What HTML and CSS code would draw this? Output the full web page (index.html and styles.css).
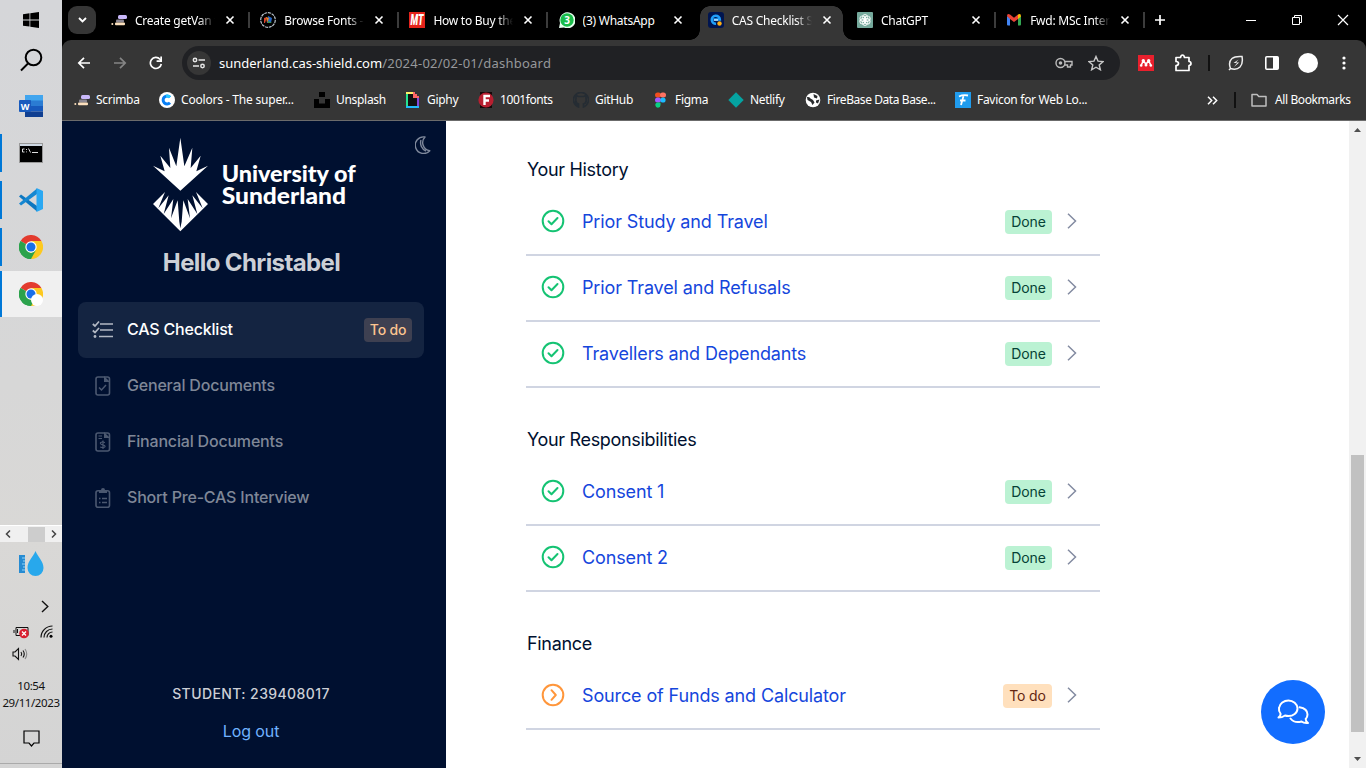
FILE: index.html
```html
<!DOCTYPE html>
<html lang="en">
<head>
<meta charset="utf-8">
<title>CAS Checklist</title>
<link rel="stylesheet" href="styles.css">
</head>
<body>
<svg class="defs" width="0" height="0" aria-hidden="true">
  <symbol id="x" viewBox="0 0 10 10"><path d="M1.5 1.5l7 7m0-7l-7 7" fill="none" stroke="#fff" stroke-width="1.6"/></symbol>
  <symbol id="scrimba" viewBox="0 0 16 16"><rect x="7" y="3" width="9" height="4" rx="1.5" fill="#c9b8fa"/><rect x="5" y="7.5" width="8" height="3" rx="1" fill="#8b8792"/><rect x="4" y="10.500" width="10" height="2.700" rx="1" fill="#fce0bd"/><circle cx="1.300" cy="12" r="1" fill="#fce0bd"/></symbol>
  <symbol id="chrome" viewBox="0 0 24 24"><path d="M12 12L1.600 6A12 12 0 0 1 22.400 6z" fill="#e33b2e"/><path d="M12 12L22.400 6A12 12 0 0 1 12 24z" fill="#fdc91f"/><path d="M12 12V24A12 12 0 0 1 1.600 6z" fill="#2ba24c"/><path d="M12 6H22.400L17 15z" fill="#fdc91f"/><path d="M17.200 15L12 24L8 14z" fill="#fdc91f"/><path d="M1.600 6L6.800 15L12 18L17 15L12 24A12 12 0 0 1 1.600 6" fill="#2ba24c"/><circle cx="12" cy="12" r="5.700" fill="#fff"/><circle cx="12" cy="12" r="4.500" fill="#1a6fe8"/></symbol>
  <symbol id="check" viewBox="0 0 24 24"><g fill="none" stroke="#15c373" stroke-width="2"><circle cx="12" cy="12" r="10.300"/><path d="M7.500 12.200l3 3 6-6.200" stroke-linecap="round" stroke-linejoin="round"/></g></symbol>
  <symbol id="next" viewBox="0 0 10 16"><path d="M1 .8l7.500 7.200L1 15.200" fill="none" stroke="#838ba1" stroke-width="1.500"/></symbol>
</svg>
<div class="screen">
  <aside class="taskbar">
    <div class="task start"><svg width="16" height="16" viewBox="0 0 16 16"><path d="M0 2.200l6.500-.9v6.200H0zM7.300 1.200L16 0v7.500H7.300zM0 8.400h6.500v6.200L0 13.700zM7.300 8.400H16V16l-8.700-1.200z"/></svg></div>
    <div class="task search"><svg width="24" height="24" viewBox="0 0 24 24"><g fill="none" stroke="#000" stroke-width="2"><circle cx="14.500" cy="9.500" r="7.800"/><path d="M9 15.500L2 22.500"/></g></svg></div>
    <div class="task"><svg width="24" height="22" viewBox="0 0 24 22"><path d="M6 0h18v6H6z" fill="#41a5ee"/><path d="M6 5.500h18V11H6z" fill="#2b7cd3"/><path d="M6 11h18v5.500H6z" fill="#185abd"/><path d="M6 16.500h18V22H6z" fill="#103f91"/><rect y="5" width="12" height="12" rx="1" fill="#185abd"/><text x="6" y="14.500" text-anchor="middle" class="word-letter">W</text></svg></div>
    <div class="task open"><svg width="24" height="20" viewBox="0 0 24 20"><rect x=".5" y=".5" width="23" height="19" fill="#000" stroke="#999"/><path d="M1 1h22v2H1z" fill="#cfd9e4"/><path d="M5.500 6H3.500v3h2M7.500 6v1m0 1.500v.8M9.500 5.500l2 4M13 9.500h6" stroke="#ddd" fill="none"/></svg></div>
    <div class="task open"><svg width="24" height="24" viewBox="0 0 24 24"><path d="M0 8.500L2 6.500 18 18v5.500z" fill="#0d77c0"/><path d="M0 15.500L2 17.500 18 6V.5z" fill="#1587d1"/><path d="M17.500 0L24 3v18l-6.500 3z" fill="#2aa8f2"/></svg></div>
    <div class="task open"><svg width="24" height="24"><use href="#chrome"/></svg></div>
    <div class="task open current"><svg width="24" height="24"><use href="#chrome"/><circle cx="18" cy="18" r="6" fill="#fff"/></svg></div>
    <div class="task-gap"></div>
    <div class="hscroll"><svg width="6" height="8" viewBox="0 0 6 8"><path d="M5 .5L1.500 4 5 7.500" fill="none" stroke="#444" stroke-width="1.500"/></svg><i></i><svg width="6" height="8" viewBox="0 0 6 8"><path d="M1 .5L4.500 4 1 7.500" fill="none" stroke="#444" stroke-width="1.500"/></svg></div>
    <div class="weather"><svg width="26" height="25" viewBox="0 0 26 25"><path d="M1 4h6v18H1z" fill="#268bd2"/><path d="M4 7h3M5 10h2M4 13h3M5 16h2M4 19h3" stroke="#8fd4fa"/><path d="M17.500 0C20 6 25.500 10 25.500 17a8 8 0 0 1-16 0C9.500 10 15 6 17.500 0z" fill="#28a8ec"/></svg></div>
    <div class="expand"><svg width="8" height="13" viewBox="0 0 8 13"><path d="M1 1l5.800 5.500L1 12" fill="none" stroke="#111" stroke-width="1.400"/></svg></div>
    <div class="tray">
      <svg width="16" height="14" viewBox="0 0 16 14"><path d="M3 2.500h12v8H3zM1 5v3" fill="none" stroke="#111"/><path d="M4.500 4v4" stroke="#111"/><circle cx="11" cy="8.500" r="4.800" fill="#d91f30"/><path d="M9 6.500l4 4m0-4l-4 4" stroke="#fff" stroke-width="1.300"/></svg>
      <svg width="13" height="13" viewBox="0 0 13 13"><g fill="none" stroke="#111" stroke-width="1.200"><path d="M1 12.500A11.500 11.500 0 0 1 12.500 1M4 12.500A8.500 8.500 0 0 1 12.500 4M7 12.500A5.500 5.500 0 0 1 12.500 7"/></g><circle cx="11" cy="11.300" r="1.500"/></svg>
    </div>
    <div class="volume"><svg width="16" height="14" viewBox="0 0 16 14"><g fill="none" stroke="#111" stroke-width="1.100"><path d="M1 5h2l3.500-3.500v11L3 9H1zM9 5q1.500 2 0 4M11 3.500q2.500 3.500 0 7"/><path d="M13 2q3.500 5 0 10" stroke="#888"/></g></svg></div>
    <div class="clock"><span>10:54</span><span>29/11/2023</span></div>
    <div class="notice"><svg width="17" height="17" viewBox="0 0 17 17"><path d="M1 1h15v12h-5L8.500 16 6 13H1z" fill="none" stroke="#000" stroke-width="1.200"/></svg></div>
  </aside>

  <div class="browser">
    <header class="tabstrip">
      <div class="tab-menu"><svg width="9" height="6" viewBox="0 0 9 6"><path d="M1 1l3.500 3.500L8 1" fill="none" stroke="#fff" stroke-width="1.800"/></svg></div>
      <div class="tabs">
        <div class="tab"><svg width="16" height="16"><use href="#scrimba"/></svg><span class="fade">Create getVan t</span><svg class="close"><use href="#x"/></svg></div>
        <div class="tab"><svg width="16" height="16" viewBox="0 0 16 16"><circle cx="8" cy="8" r="7.300" fill="#000" stroke="#b7c2cb" stroke-width="1.200" stroke-dasharray="3 .8"/><path d="M4 6l3-1-2 6H4z" fill="#d8432c"/><path d="M8 4l4 2-1 5H7z" fill="#2768c8"/><path d="M8 9l4 2H8z" fill="#3d9c39"/><path d="M6 5l3 1-2 5z" fill="#e58424"/></svg><span class="fade">Browse Fonts - G</span><svg class="close"><use href="#x"/></svg></div>
        <div class="tab"><svg width="16" height="16" viewBox="0 0 16 16"><path d="M0 0h16v16H0z" fill="#e3231b"/><text x="8" y="13" text-anchor="middle" textLength="13" lengthAdjust="spacingAndGlyphs" class="mt-mark">MT</text></svg><span class="fade">How to Buy the M</span><svg class="close"><use href="#x"/></svg></div>
        <div class="tab"><svg width="16" height="16" viewBox="0 0 16 16"><path d="M0 16l1-5A8 8 0 1 1 5 15.500z" fill="#e8fff0"/><circle cx="8" cy="8" r="6.700" fill="#19bd4b"/><text x="8" y="11.800" text-anchor="middle" class="wa-count">3</text></svg><span class="fade whole">(3) WhatsApp</span><svg class="close"><use href="#x"/></svg></div>
        <div class="tab active"><svg width="16" height="16" viewBox="0 0 16 16"><rect width="16" height="16" rx="3" fill="#001550"/><path d="M8 11.800A4 4 0 1 1 11.800 7.500H5.500" fill="none" stroke="#20a0fa" stroke-width="2.600"/><path d="M6 8h4" stroke="#d7f1ff" stroke-width="1.300"/><circle cx="11.500" cy="11.500" r="2.200" fill="#ffae13"/></svg><span class="fade">CAS Checklist S</span><svg class="close"><use href="#x"/></svg></div>
        <div class="tab"><svg width="16" height="16" viewBox="0 0 16 16"><rect width="16" height="16" rx="1" fill="#75a99c"/><g fill="none" stroke="#fff" stroke-width=".9"><ellipse cx="8" cy="5.500" rx="2.600" ry="3"/><ellipse cx="8" cy="5.500" rx="2.600" ry="3" transform="rotate(60 8 8)"/><ellipse cx="8" cy="5.500" rx="2.600" ry="3" transform="rotate(120 8 8)"/><ellipse cx="8" cy="5.500" rx="2.600" ry="3" transform="rotate(180 8 8)"/><ellipse cx="8" cy="5.500" rx="2.600" ry="3" transform="rotate(240 8 8)"/><ellipse cx="8" cy="5.500" rx="2.600" ry="3" transform="rotate(300 8 8)"/></g></svg><span class="fade">ChatGPT</span><svg class="close"><use href="#x"/></svg></div>
        <div class="tab"><svg width="16" height="16" viewBox="0 0 16 16"><path d="M1 4l3 2v7.500H2q-1 0-1-1z" fill="#4285f4"/><path d="M12 6l3-2v8.500q0 1-1 1h-2z" fill="#34a853"/><path d="M1 4q0-3 3-1.500l4 3.200 4-3.200V7L8 10 4 7z" fill="#ea4335"/><path d="M12 2.500Q15 1 15 4.500L12 7z" fill="#fbbc04"/></svg><span class="fade">Fwd: MSc Intern</span><svg class="close"><use href="#x"/></svg></div>
      </div>
      <svg class="plus" width="12" height="12" viewBox="0 0 12 12"><path d="M6 1v10M1 6h10" stroke="#fff" stroke-width="1.700"/></svg>
      <div class="window-controls">
        <svg width="12" height="12" viewBox="0 0 12 12"><path d="M1 6.500h10" stroke="#fff"/></svg>
        <svg width="12" height="12" viewBox="0 0 12 12"><path d="M1.500 3.500h7v7h-7zM3.500 3V1.500h7v7H9" fill="none" stroke="#fff"/></svg>
        <svg width="12" height="12" viewBox="0 0 12 12"><path d="M1 1l10 10M11 1L1 11" stroke="#fff" stroke-width="1.200"/></svg>
      </div>
    </header>
    <div class="chrome-bars">
    <div class="toolbar">
      <div class="navs">
        <svg width="14" height="14" viewBox="0 0 14 14"><path d="M13 7H2M7 1.800L1.800 7 7 12.200" fill="none" stroke="#fff" stroke-width="1.700"/></svg>
        <svg width="14" height="14" viewBox="0 0 14 14"><path d="M1 7h11M7 1.800L12.200 7 7 12.200" fill="none" stroke="#858585" stroke-width="1.700"/></svg>
        <svg width="14" height="14" viewBox="0 0 14 14"><path d="M12.300 8A5.500 5.500 0 1 1 11 3.300L12.500 5" fill="none" stroke="#fff" stroke-width="1.700"/><path d="M13 .5v5.500H7.600V4.300h3.700V.5z" fill="#fff"/></svg>
      </div>
      <div class="omnibox">
        <div class="site"><svg width="14" height="12" viewBox="0 0 14 12"><g fill="none" stroke="#e6e6e6" stroke-width="1.500"><circle cx="3" cy="3" r="1.700"/><path d="M6.500 3H13M1 9h6"/><circle cx="10.500" cy="9" r="1.700"/></g></svg></div>
        <div class="url">sunderland.cas-shield.com<span>/2024-02/02-01/dashboard</span></div>
        <svg width="18" height="12" viewBox="0 0 18 12"><circle cx="5.500" cy="6" r="4.500" fill="none" stroke="#bcbcbc" stroke-width="1.400"/><circle cx="5.500" cy="6" r="1.800" fill="#bcbcbc"/><path d="M9.500 4.500H17V8h-1.500v2h-3V8h-3" fill="none" stroke="#bcbcbc" stroke-width="1.400"/></svg>
        <svg class="star" width="16" height="16" viewBox="0 0 16 16"><path d="M8 1.500l2 4.600 5 .5-3.800 3.300 1.200 4.900L8 12.200l-4.400 2.600 1.200-4.900L1 6.600l5-.5z" fill="none" stroke="#c7c7c7" stroke-width="1.400"/></svg>
      </div>
      <div class="extensions">
        <svg width="16" height="16" viewBox="0 0 16 16"><path d="M0 0h16v16H0z" fill="#e9202d"/><g fill="#fff"><circle cx="5.300" cy="5.800" r="1.700"/><circle cx="10.700" cy="5.800" r="1.700"/><circle cx="3.200" cy="10.500" r="1.300"/><circle cx="8" cy="10" r="1.500"/><circle cx="12.800" cy="10.500" r="1.300"/></g><path d="M3 10.500L5.300 6 8 9l2.700-3L13 10.500" stroke="#fff" stroke-width="1.600" fill="none"/></svg>
        <svg width="18" height="18" viewBox="0 0 18 18"><path d="M2 3.500h4.500Q7 1 8.500 1T10.500 3.500H15v4q2 .2 2 2t-2 2v5H2v-5q2.500 0 2.500-2T2 7.500z" fill="none" stroke="#fff" stroke-width="1.700" stroke-linejoin="round"/></svg>
        <i></i>
        <svg width="16" height="16" viewBox="0 0 16 16"><path d="M2.500 13.500Q0 7 4 3.500 7 1 14 1.500q1.300 7-2 10.500-3.500 3.500-9.500 1.500zM1 15l2-2" fill="none" stroke="#eee" stroke-width="1.500"/><path d="M10.500 4.500L5.500 8H9l-3 4 5.200-4.600H8z" fill="#eee"/></svg>
        <svg width="16" height="16" viewBox="0 0 16 16"><rect x="1.800" y="1.800" width="12.400" height="12.400" rx="1" fill="none" stroke="#fff" stroke-width="1.600"/><path d="M9 2h5v12H9z" fill="#fff"/></svg>
        <b></b>
        <svg width="4" height="16" viewBox="0 0 4 16"><g fill="#fff"><circle cx="2" cy="3" r="1.600"/><circle cx="2" cy="8" r="1.600"/><circle cx="2" cy="13" r="1.600"/></g></svg>
      </div>
    </div>
    <div class="bookmarks">
      <div class="bm"><svg width="16" height="16"><use href="#scrimba"/></svg><span>Scrimba</span></div>
      <div class="bm coolors"><svg width="16" height="16" viewBox="0 0 16 16"><circle cx="8" cy="8" r="8" fill="#fff"/><path d="M11 5.200A4 4 0 1 0 11 10.800" fill="none" stroke="#087ff5" stroke-width="3"/><path d="M7 4.100A4 4 0 0 1 11 5.200" fill="none" stroke="#27c7ff" stroke-width="3"/></svg><span>Coolors - The super...</span></div>
      <div class="bm"><svg width="16" height="16" viewBox="0 0 16 16"><path d="M5 0h6v5H5zM0 7h5v4.500h6V7h5v9H0z"/></svg><span>Unsplash</span></div>
      <div class="bm giphy"><svg width="13" height="16" viewBox="0 0 13 16"><path d="M0 1h2v14H0z" fill="#27e391"/><path d="M0 14h13v2H0z" fill="#20bcff"/><path d="M11 6h2v8h-2z" fill="#8347db"/><path d="M0 0h7v2H0z" fill="#fff06a"/><path d="M7 0h2v2h2v2h2v2H7z" fill="#ff6565"/><path d="M2 2h5v4h4v8H2z" fill="#121212"/></svg><span>Giphy</span></div>
      <div class="bm fonts"><svg width="16" height="16" viewBox="0 0 16 16"><path d="M2 0h12v16H2z" fill="#150709"/><circle cx="8" cy="8" r="7.600" fill="#b71f30"/><path d="M6.500 13V4H12M6.500 8.500H11" stroke="#fff" stroke-width="2.400" fill="none"/></svg><span>1001fonts</span></div>
      <div class="bm"><svg width="16" height="16" viewBox="0 0 16 16"><path d="M5.500 15v-3Q2 11 3 6.500L3 3.500l2.500 1h5l2.500-1v3Q14 11 10.500 12v3A7.500 7.500 0 1 0 5.500 15zM1 10q2 0 2.500 2.500L5.500 13" fill="none" stroke="#252c33" stroke-width="1.700"/></svg><span>GitHub</span></div>
      <div class="bm figma"><svg width="11" height="16" viewBox="0 0 11 16"><rect x="0" y=".5" width="6" height="5" rx="2.500" fill="#f24e1e"/><rect x="5" y=".5" width="6" height="5" rx="2.500" fill="#ff7262"/><rect y="5.500" width="6" height="5" rx="2.500" fill="#a259ff"/><circle cx="8" cy="8" r="2.600" fill="#1abcfe"/><path d="M2.500 10.500h3V13a2.600 2.600 0 1 1-3-2.500z" fill="#0acf83"/></svg><span>Figma</span></div>
      <div class="bm"><svg width="16" height="16" viewBox="0 0 16 16"><path d="M8 .3L15.700 8 8 15.700.3 8z" fill="#05a3a1"/></svg><span>Netlify</span></div>
      <div class="bm firebase"><svg width="16" height="16" viewBox="0 0 16 16"><circle cx="8" cy="8" r="7.300" fill="#fff"/><path d="M2 5q3-.5 3.500 1.500L8 8l1.500 2.500L7.500 13 6 10 2.500 8zM8.500 2l4 2-.5 2.500-3-1zM11 8.500l3.500-1L13 11.500l-2-1z" fill="#292b2d"/></svg><span>FireBase Data Base...</span></div>
      <div class="bm"><svg width="16" height="16" viewBox="0 0 16 16"><path d="M0 0h16v16H0z" fill="#209cee"/><path d="M4 4.500q4-2 9-1M8.500 4L6 13M5 8.500h5.500" fill="none" stroke="#fff" stroke-width="1.800"/></svg><span>Favicon for Web Lo...</span></div>
      <div class="more"><svg width="11" height="9" viewBox="0 0 11 9"><path d="M1 .8l3.700 3.700L1 8.200M6 .8l3.700 3.700L6 8.200" fill="none" stroke="#fff" stroke-width="1.500"/></svg></div>
      <div class="bm-sep"></div>
      <div class="bm all"><svg width="16" height="14" viewBox="0 0 16 14"><path d="M1 1.500h5l1.800 2H15V13H1z" fill="none" stroke="#bebebe" stroke-width="1.500" stroke-linejoin="round"/></svg><span>All Bookmarks</span></div>
    </div>
    </div>

    <div class="page">
      <nav class="sidebar">
        <div class="brand">
          <svg class="logo" width="205" height="97" viewBox="270 43 615 291"><g fill="#fff"><path d="M355 207L273 132 308 149 295 102 325 139 321 78 343 134 355 48 367 134 391 78 386 139 416 102 403 149 438 132z"/><path d="M273 247L309 211 289 260 320 221 305 277 334 232 327 290 347 236 352 300 355 320 359 300 364 236 384 290 377 232 406 277 391 221 422 260 402 211 438 247 355 329z"/></g><g class="logo-text"><text x="479" y="180" textLength="402" lengthAdjust="spacingAndGlyphs">University of</text><text x="479" y="247" textLength="373" lengthAdjust="spacingAndGlyphs">Sunderland</text></g></svg>
          <svg class="moon" width="16" height="18" viewBox="0 0 16 18"><path d="M10 1A8.300 8.300 0 1 0 14.800 14.700 8.100 8.100 0 0 1 10 1zM6 4a9 9 0 0 0 5 11" fill="none" stroke="#7f899c" stroke-width="1.400" stroke-linejoin="round"/></svg>
        </div>
        <h1>Hello Christabel</h1>
        <div class="menu">
          <div class="item selected"><svg width="22" height="20" viewBox="0 0 22 20"><g fill="none" stroke="#b2b8c3" stroke-width="1.700"><path d="M8 4h13M8 10h13M7 16.500h14M.8 4L3 6l4-4.500M.8 10.500l2.200 2L7 8"/></g><circle cx="3" cy="16.500" r="1.400" fill="#b2b8c3"/></svg><span>CAS Checklist</span><em>To do</em></div>
          <div class="item"><svg width="22" height="20" viewBox="0 0 22 20"><rect x="4" y="1" width="13.500" height="18" rx="2" fill="none" stroke="#4b5870" stroke-width="1.600"/><path d="M12 0l6 6h-6z" fill="#4b5870"/><path d="M7 11.500l2.500 2.500L14 9" fill="none" stroke="#4b5870" stroke-width="1.500"/></svg><span>General Documents</span></div>
          <div class="item"><svg width="22" height="20" viewBox="0 0 22 20"><rect x="4" y="1" width="13.500" height="18" rx="2" fill="none" stroke="#4b5870" stroke-width="1.600"/><path d="M12 0l6 6h-6z" fill="#4b5870"/><path d="M6.500 4H10M6.500 6.500H10M13 10.500q-5-1-4.500 1 .2 1 2.500 1.500 2.300.5 2 1.700-.8 1.500-4.800.3M11 8.500v8.500" fill="none" stroke="#4b5870" stroke-width="1.200"/></svg><span>Financial Documents</span></div>
          <div class="item"><svg width="22" height="20" viewBox="0 0 22 20"><rect x="4" y="2.800" width="13.500" height="16.400" rx="2" fill="none" stroke="#4b5870" stroke-width="1.600"/><path d="M7 5V2h2a2 2 0 0 1 4 0h2v3z" fill="#4b5870"/><path d="M7 10.500h1.500M10 10.500h5M7 14.500h1.500M10 14.500h5" stroke="#4b5870" stroke-width="1.300"/></svg><span>Short Pre-CAS Interview</span></div>
        </div>
        <div class="account"><p>STUDENT: 239408017</p><a>Log out</a></div>
      </nav>
      <main class="content">
        <section><h2>Your History</h2>
          <div class="row"><svg class="state"><use href="#check"/></svg><a>Prior Study and Travel</a><em>Done</em><svg class="next"><use href="#next"/></svg></div>
          <div class="row"><svg class="state"><use href="#check"/></svg><a>Prior Travel and Refusals</a><em>Done</em><svg class="next"><use href="#next"/></svg></div>
          <div class="row"><svg class="state"><use href="#check"/></svg><a>Travellers and Dependants</a><em>Done</em><svg class="next"><use href="#next"/></svg></div>
        </section>
        <section><h2>Your Responsibilities</h2>
          <div class="row"><svg class="state"><use href="#check"/></svg><a>Consent 1</a><em>Done</em><svg class="next"><use href="#next"/></svg></div>
          <div class="row"><svg class="state"><use href="#check"/></svg><a>Consent 2</a><em>Done</em><svg class="next"><use href="#next"/></svg></div>
        </section>
        <section><h2>Finance</h2>
          <div class="row"><svg class="state" viewBox="0 0 24 24"><g fill="none" stroke="#ff963b" stroke-width="2"><circle cx="12" cy="12" r="10.300"/><path d="M10.500 7.200l4.300 4.800-4.300 4.800" stroke-linecap="round" stroke-linejoin="round"/></g></svg><a>Source of Funds and Calculator</a><em class="todo">To do</em><svg class="next"><use href="#next"/></svg></div>
        </section>
        <button class="chat" aria-label="Chat"><svg width="32" height="26" viewBox="0 0 32 26"><g fill="none" stroke="#fff" stroke-width="2" stroke-linejoin="round" stroke-linecap="round"><path d="M1.500 18.500Q4 16.500 3.500 14.500 1.500 12 2 9C2.500 4.500 7 1.500 11.500 1.500S20.500 5 20.500 9.500 16 17 11.500 17q-2 0-3.500-.5-3 2-6.500 2z"/><path d="M22.500 8.200Q30.500 9.500 30.500 15.500q0 2.500-1.800 4.500 0 2.500 2.300 4-4 .5-6.500-1.500-7 2-11-3"/></g></svg></button>
      </main>
      <div class="vscroll"><svg width="7" height="4" viewBox="0 0 7 4"><path d="M0 4l3.500-4L7 4z" fill="#505050"/></svg><i></i><svg width="7" height="4" viewBox="0 0 7 4"><path d="M0 0h7L3.500 4z" fill="#505050"/></svg></div>
    </div>
  </div>
</div>
</body>
</html>
```
FILE: styles.css
```css
* { box-sizing: border-box; }
body { margin: 0; font-family: Inter, sans-serif; overflow: hidden; }
svg { display: block; flex: none; }
.defs { position: absolute; }
em { font-style: normal; }
.screen { display: grid; grid-template-columns: 62px 1304px; width: 1366px; height: 768px; }

.taskbar { display: flex; flex-direction: column; height: 768px; background: linear-gradient(#d5d6d9, #d7d7d7 50%, #d9d8d6 70%, #d4d4d4); font-family: "Noto Sans", sans-serif; }
.task { display: flex; align-items: center; justify-content: center; height: 47px; flex: none; position: relative; }
.task.start { height: 40px; }
.task.search { height: 42px; padding-bottom: 2px; }
.task.open::before { content: ""; position: absolute; left: 0; top: 5px; width: 2px; height: 38px; background: #0078d7; }
.task.current { background: #f0f0f0; margin-top: 1px; height: 46px; }
.task.current::before { top: 0; height: 46px; }
.word-letter { font: 700 9px "Open Sans", sans-serif; fill: #fff; }
.wa-count { font: 700 10px "Open Sans", sans-serif; fill: #fff; }
.mt-mark { font: italic 900 14px Roboto, sans-serif; fill: #fff; }
.task-gap { flex: 1; }
.hscroll { height: 17px; background: #f0f0f0; display: flex; align-items: center; padding: 0 5px; gap: 17px; border-top: 1px solid #fff; }
.hscroll i { width: 17px; height: 15px; background: #cdcdcd; }
.hscroll svg:last-child { margin-left: -11px; }
.weather { height: 44px; display: flex; align-items: center; justify-content: center; padding-bottom: 1px; }
.expand { height: 37px; display: flex; align-items: center; padding: 3px 0 0 41px; }
.tray { height: 17px; display: flex; align-items: center; gap: 11px; padding-left: 13px; }
.volume { height: 27px; display: flex; align-items: center; padding-left: 12px; }
.clock { height: 44px; padding-top: 10px; display: flex; flex-direction: column; align-items: center; font-size: 11.500px; line-height: 17px; color: #111; letter-spacing: -.4px; white-space: nowrap; }
.notice { height: 57px; padding: 19px 0 0 23px; }
.notice::after { content: ""; display: block; height: 1px; margin: 16px 0 0 -23px; background: #aaa; }

.browser { display: flex; flex-direction: column; height: 768px; background: #000; font-family: "Noto Sans", sans-serif; }
.tabstrip { height: 40px; display: flex; align-items: center; color: #fff; }
.tab-menu { width: 28px; height: 28px; margin: 0 7px 0 6px; border-radius: 9px; background: #363636; display: flex; align-items: center; justify-content: center; }
.tabs { display: grid; grid-template-columns: repeat(7, 149.200px); height: 40px; }
.tab { position: relative; display: flex; align-items: center; padding-left: 8px; gap: 8px; }
.tab::after { content: ""; position: absolute; left: 145px; top: 12px; width: 2px; height: 16px; background: #3c3c3c; }
.tab.active::after, .tab:nth-child(4)::after { display: none; }
.tab > svg, .tab > span { position: relative; }
.fade { width: 80px; overflow: hidden; white-space: nowrap; font-size: 12px; letter-spacing: -.25px; line-height: 18px; padding-top: 1px; mask-image: linear-gradient(90deg, #000 64px, transparent 80px); }
.whole { mask-image: none; }
.close { width: 10px; height: 10px; margin-left: 2px; }
.tab.active::before { content: ""; position: absolute; left: -10px; top: 6px; width: 163px; height: 34px;
  background:
    radial-gradient(circle at 0 0, transparent 9.500px, #363636 10px) 0 24px / 10px 10px no-repeat,
    radial-gradient(circle at 10px 0, transparent 9.500px, #363636 10px) 153px 24px / 10px 10px no-repeat,
    radial-gradient(circle at 10px 10px, #363636 9.500px, transparent 10px) 10px 0 / 10px 10px no-repeat,
    radial-gradient(circle at 0 10px, #363636 9.500px, transparent 10px) 143px 0 / 10px 10px no-repeat,
    linear-gradient(#363636, #363636) 20px 0 / 123px 10px no-repeat,
    linear-gradient(#363636, #363636) 10px 10px / 143px 24px no-repeat; }
.plus { margin-left: 7px; }
.window-controls { display: flex; gap: 34px; margin-left: auto; padding-right: 17px; }

.chrome-bars { background: #363636; border-radius: 9px 9px 0 0; height: 81px; border-bottom: 1px solid #6b6b6b; flex: none; }
.toolbar { height: 46px; display: flex; align-items: center; padding-left: 15px; }
.navs { display: flex; gap: 22px; width: 105px; }
.omnibox { width: 938px; height: 34px; border-radius: 17px; background: #202124; display: flex; align-items: center; padding: 0 16px 0 5px; }
.site { width: 24px; height: 24px; border-radius: 50%; background: #363636; display: flex; align-items: center; justify-content: center; }
.url { flex: 1; margin-left: 8px; font-size: 13px; line-height: 20px; color: #fff; letter-spacing: 0; }
.url span { color: #96989b; letter-spacing: .25px; }
.star { margin-left: 15px; }
.extensions { display: flex; align-items: center; margin-left: 18px; }
.extensions > :nth-child(2) { margin-left: 20px; }
.extensions i { width: 2px; height: 16px; background: #111; margin: 0 18px 0 16px; }
.extensions > :nth-child(5) { margin-left: 20px; }
.extensions b { width: 20px; height: 20px; border-radius: 50%; background: #fff; margin: 0 24px 0 18px; }
.bookmarks { height: 34px; display: grid; grid-template-columns: 85px 155px 92px 72px 95px 81px 74px 77px 150px 235px 44px 17px 117px; padding: 0 0 6px 12px; align-items: center; color: #fff; }
.bm { display: flex; align-items: center; gap: 6px; font-size: 12px; line-height: 18px; letter-spacing: -.3px; white-space: nowrap; }
.bm.coolors { letter-spacing: -.2px; }
.bm.fonts, .bm.firebase { letter-spacing: -.42px; }
.giphy { gap: 8px; }
.figma { gap: 9px; padding-left: 1px; }
.more { justify-self: center; }
.bm-sep { width: 2px; height: 16px; background: #111; }
.bm.all { gap: 8px; letter-spacing: -.45px; }
.bm.all { letter-spacing: -.4px; }

.page { flex: 1; display: grid; grid-template-columns: 384px 903px 17px; background: #fff; font-family: Inter, sans-serif; }
.sidebar { background: #001030; display: flex; flex-direction: column; }
.brand { display: flex; padding: 15px 0 0 90px; gap: 58px; height: 123px; }
.logo-text { font: 900 66px Lato, sans-serif; fill: #fff; }
h1 { margin: 0 0 21px; text-align: center; padding-right: 5px; font-size: 24px; line-height: 37px; height: 37px; font-weight: 700; letter-spacing: -.6px; color: #cccfd6; }
.menu { padding: 0 22px 0 16px; }
.item { height: 56px; display: flex; align-items: center; padding: 0 12px 0 14px; font-size: 16px; font-weight: 500; letter-spacing: -.19px; color: #7f8797; border-radius: 8px; }
.item svg { margin-right: 13px; }
.item span { position: relative; top: -1px; }
.selected { background: #142441; color: #fff; }
.selected em { margin-left: auto; width: 48px; height: 24px; line-height: 24px; border-radius: 4px; text-align: center; font-size: 14px; background: #3e4051; color: #fdc590; }
.account { margin-top: auto; text-align: center; padding: 0 6px 25px 0; }
.account p { margin: 0 0 13px; font-size: 14px; font-weight: 500; line-height: 24px; letter-spacing: .4px; color: #cccfd6; }
.account a { display: block; font-size: 16px; line-height: 24px; letter-spacing: -.1px; color: #70b2ff; }
.content { position: relative; padding: 29px 249px 0 80px; color: #001030; }
section { margin-bottom: 32px; }
h2 { margin: 0; height: 40px; line-height: 40px; font-size: 18px; font-weight: 400; letter-spacing: -.32px; padding-left: 1px; }
.row { height: 66px; border-bottom: 2px solid #d0d5e2; display: flex; align-items: center; padding: 0 23px 0 15px; }
.state { width: 24px; height: 24px; margin: -2px 17px 0 0; }
.row a { flex: 1; font-size: 18px; line-height: 28px; letter-spacing: -.13px; color: #1546dc; }
.row em { width: 47px; height: 24px; border-radius: 4px; background: #bbf2d3; color: #064236; font-size: 14px; line-height: 24px; letter-spacing: -.1px; text-align: center; }
.row em.todo { width: 49px; background: #ffe0bd; color: #632611; }
.next { width: 10px; height: 16px; margin: -2px 0 0 15px; }
.chat { position: absolute; right: 24px; bottom: 24px; width: 64px; height: 64px; padding: 0; border: 0; border-radius: 50%; background: #126dff; display: flex; align-items: center; justify-content: center; }
.vscroll { background: #f1f1f1; display: flex; flex-direction: column; align-items: center; padding-top: 7px; }
.vscroll i { width: 13px; height: 277px; margin: 323px 0 25px; background: #c1c1c1; }
```
